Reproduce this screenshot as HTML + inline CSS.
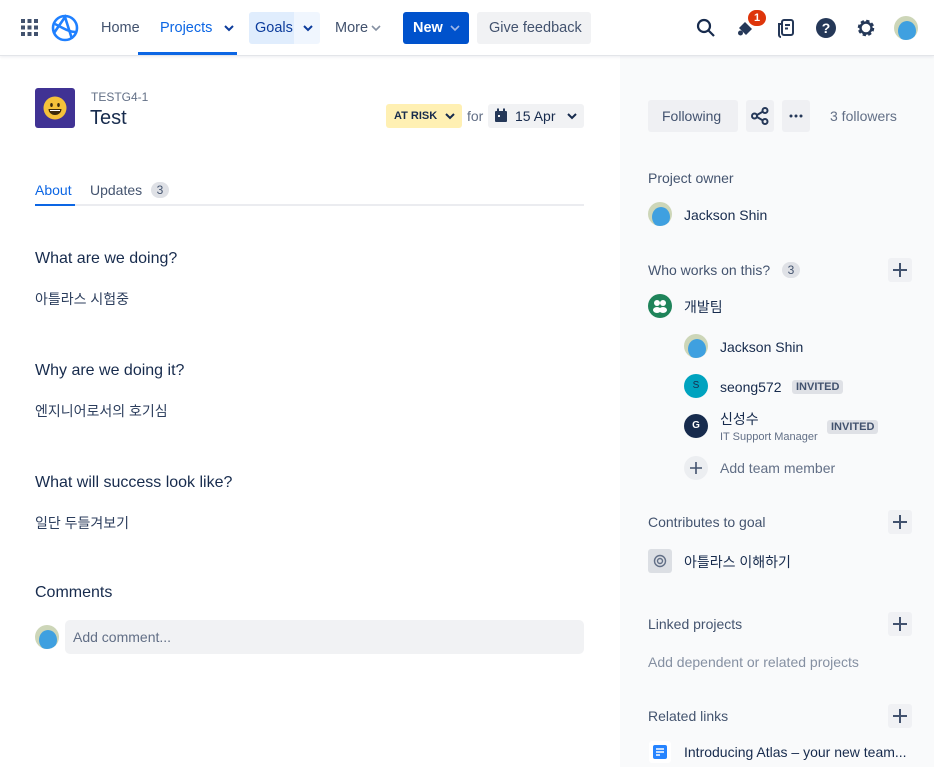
<!DOCTYPE html>
<html><head><meta charset="utf-8">
<style>
*{box-sizing:border-box;margin:0;padding:0}
body{width:934px;height:767px;overflow:hidden;background:#fff;font-family:"Liberation Sans","Noto Sans CJK KR",sans-serif;color:#172b4d;position:relative}
.a{position:absolute;white-space:nowrap}
.hdr{position:absolute;left:0;top:0;width:934px;height:56px;background:#fff;border-bottom:1px solid #e3e5e9;box-shadow:0 1px 3px rgba(9,30,66,.08);z-index:2}
.side{position:absolute;left:620px;top:56px;width:314px;height:711px;background:#f9fafb}
.nav{font-size:14.5px;color:#42526e}
.btnsq{position:absolute;width:24px;height:24px;background:#f0f1f4;border-radius:3px}
.btnsq:before,.btnsq:after{content:"";position:absolute;background:#42526e;left:11px;top:5px;width:2px;height:14px}
.btnsq:after{left:5px;top:11px;width:14px;height:2px}
.h{font-size:14px;color:#44546f}
.q{font-size:16px;color:#172b4d}
.k{font-size:14px;color:#172b4d}
.inv{position:absolute;background:#dfe1e6;color:#42526e;font-size:11px;font-weight:bold;padding:1px 4px;border-radius:3px}
.av{position:absolute;border-radius:50%;overflow:hidden}
</style></head><body>
<div class="hdr">
  <svg class="a" style="left:21px;top:19px" width="17" height="17" viewBox="0 0 17 17" fill="#42526e"><rect x="0" y="0" width="4" height="4"/><rect x="6.5" y="0" width="4" height="4"/><rect x="13" y="0" width="4" height="4"/><rect x="0" y="6.5" width="4" height="4"/><rect x="6.5" y="6.5" width="4" height="4"/><rect x="13" y="6.5" width="4" height="4"/><rect x="0" y="13" width="4" height="4"/><rect x="6.5" y="13" width="4" height="4"/><rect x="13" y="13" width="4" height="4"/></svg>
  <svg class="a" style="left:51px;top:14px" width="28" height="28" viewBox="0 0 28 28" fill="none" stroke="#1f80ff" stroke-width="2.6"><circle cx="14" cy="14" r="12"/><path d="M3 19 L14 3 L21 25"/><path d="M4 10 C12 14 18 18 25 18"/></svg>
  <div class="a nav" style="left:101px;top:20px">Home</div>
  <div class="a nav" style="left:160px;top:20px;color:#0c66e4">Projects</div>
  <svg class="a" style="left:224px;top:24px" width="10" height="8"><path d="M1 2 L5 6 L9 2" stroke="#0c3c9c" stroke-width="2" fill="none"/></svg>
  <div class="a" style="left:138px;top:52px;width:99px;height:3px;background:#0c66e4"></div>
  <div class="a" style="left:249px;top:12px;width:45px;height:32px;background:#e0edfd;border-radius:3px 0 0 3px"></div>
  <div class="a" style="left:294px;top:12px;width:26px;height:32px;background:#f0f6fe;border-radius:0 3px 3px 0"></div>
  <div class="a nav" style="left:255px;top:20px;color:#0c3c9c">Goals</div>
  <svg class="a" style="left:303px;top:24px" width="10" height="8"><path d="M1 2 L5 6 L9 2" stroke="#0c3c9c" stroke-width="2" fill="none"/></svg>
  <div class="a nav" style="left:335px;top:20px">More</div>
  <svg class="a" style="left:371px;top:24px" width="10" height="8"><path d="M1 2 L5 6 L9 2" stroke="#8590a2" stroke-width="1.6" fill="none"/></svg>
  <div class="a" style="left:403px;top:12px;width:66px;height:32px;background:#0052cc;border-radius:3px"></div>
  <div class="a" style="left:413px;top:20px;color:#fff;font-size:14.5px;font-weight:bold">New</div>
  <svg class="a" style="left:450px;top:24px" width="10" height="8"><path d="M1 2 L5 6 L9 2" stroke="#9fb8ea" stroke-width="1.6" fill="none"/></svg>
  <div class="a" style="left:477px;top:12px;width:114px;height:32px;background:#f1f2f4;border-radius:3px"></div>
  <div class="a" style="left:489px;top:20px;color:#42526e;font-size:14.5px">Give feedback</div>
  <svg class="a" style="left:696px;top:18px" width="20" height="20" fill="none" stroke="#172b4d" stroke-width="2.2"><circle cx="8" cy="8" r="6"/><path d="M12.5 12.5 L18 18"/></svg>
  <svg class="a" style="left:737px;top:19px" width="18" height="18" fill="#253858"><path d="M2 9 L8 3 L15 10 L9 16 Z"/><circle cx="3.5" cy="14" r="2.5"/></svg>
  <div class="a" style="left:748px;top:10px;width:18px;height:16px;background:#de350b;border-radius:8px;color:#fff;font-size:11px;font-weight:bold;text-align:center;line-height:16px">1</div>
  <svg class="a" style="left:777px;top:18px" width="18" height="20" fill="none" stroke="#253858" stroke-width="2"><rect x="5" y="2" width="11" height="15" rx="2"/><path d="M5 6 H2 V17 A2 2 0 0 0 4 19"/><path d="M8 7 H13 M8 10.5 H11"/></svg>
  <svg class="a" style="left:815px;top:17px" width="22" height="22"><circle cx="11" cy="11" r="10" fill="#253858"/><text x="11" y="16" font-size="14" font-weight="bold" fill="#fff" text-anchor="middle" font-family="Liberation Sans">?</text></svg>
  <svg class="a" style="left:856px;top:18px" width="20" height="20" viewBox="0 0 20 20"><circle cx="10" cy="10" r="6.5" fill="none" stroke="#253858" stroke-width="3.5" stroke-dasharray="3 2.1"/><circle cx="10" cy="10" r="5.5" fill="none" stroke="#253858" stroke-width="2.4"/></svg>
  <div class="av" style="left:894px;top:16px;width:24px;height:24px;background:#cdd6b8"><svg width="24" height="24"><ellipse cx="13" cy="15" rx="9" ry="10" fill="#3fa0e0"/></svg></div>
</div>
<div class="side"></div>

<div class="a" style="left:35px;top:88px;width:40px;height:40px;background:#403294;border-radius:3px"></div>
<svg class="a" style="left:43px;top:96px" width="24" height="24"><circle cx="12" cy="12" r="11.5" fill="#f5c13a"/><ellipse cx="8.5" cy="9" rx="1.3" ry="2" fill="#3c2a0c"/><ellipse cx="15.5" cy="9" rx="1.3" ry="2" fill="#3c2a0c"/><path d="M5.5 13 H18.5 A6.5 6 0 0 1 5.5 13Z" fill="#3c2a0c"/><path d="M7 14 H17 V15 H7Z" fill="#fff"/></svg>
<div class="a" style="left:91px;top:90px;font-size:12px;color:#626f86">TESTG4-1</div>
<div class="a" style="left:90px;top:107px;font-size:20px;color:#172b4d">Test</div>
<div class="a" style="left:386px;top:104px;width:76px;height:24px;background:#fff0b3;border-radius:3px"></div>
<div class="a" style="left:394px;top:110px;font-size:11px;font-weight:bold;color:#172b4d">AT RISK</div>
<svg class="a" style="left:445px;top:112px" width="10" height="8"><path d="M1 2 L5 6 L9 2" stroke="#172b4d" stroke-width="2" fill="none"/></svg>
<div class="a" style="left:467px;top:108px;font-size:14px;color:#626f86">for</div>
<div class="a" style="left:488px;top:104px;width:96px;height:24px;background:#f1f2f4;border-radius:3px"></div>
<svg class="a" style="left:494px;top:108px" width="14" height="15" fill="#253858"><rect x="1" y="3" width="12" height="11" rx="1"/><rect x="3" y="0.5" width="2" height="4"/><rect x="9" y="0.5" width="2" height="4"/><rect x="4" y="7" width="2" height="2" fill="#f1f2f4"/></svg>
<div class="a" style="left:515px;top:108px;font-size:14px;color:#172b4d">15 Apr</div>
<svg class="a" style="left:567px;top:112px" width="10" height="8"><path d="M1 2 L5 6 L9 2" stroke="#172b4d" stroke-width="2" fill="none"/></svg>

<div class="a" style="left:35px;top:182px;font-size:14px;color:#0c66e4">About</div>
<div class="a" style="left:90px;top:182px;font-size:14px;color:#44546f">Updates</div>
<div class="a" style="left:151px;top:182px;width:18px;height:16px;background:#dfe1e6;border-radius:8px;font-size:12px;text-align:center;line-height:16px;color:#44546f">3</div>
<div class="a" style="left:35px;top:204px;width:549px;height:2px;background:#ebecf0"></div>
<div class="a" style="left:35px;top:204px;width:40px;height:2px;background:#0c66e4"></div>

<div class="a q" style="left:35px;top:250px">What are we doing?</div>
<div class="a k" style="left:35px;top:289px;color:#2c3e5d">아틀라스 시험중</div>
<div class="a q" style="left:35px;top:362px">Why are we doing it?</div>
<div class="a k" style="left:35px;top:401px;color:#2c3e5d">엔지니어로서의 호기심</div>
<div class="a q" style="left:35px;top:474px">What will success look like?</div>
<div class="a k" style="left:35px;top:513px;color:#2c3e5d">일단 두들겨보기</div>
<div class="a q" style="left:35px;top:584px">Comments</div>
<div class="av" style="left:35px;top:625px;width:24px;height:24px;background:#cdd6b8"><svg width="24" height="24"><ellipse cx="13" cy="15" rx="9" ry="10" fill="#3fa0e0"/></svg></div>
<div class="a" style="left:65px;top:620px;width:519px;height:34px;background:#f1f2f4;border-radius:5px"></div>
<div class="a" style="left:73px;top:629px;font-size:14px;color:#626f86">Add comment...</div>

<div class="a" style="left:648px;top:100px;width:90px;height:32px;background:#eff0f3;border-radius:3px"></div>
<div class="a" style="left:662px;top:108px;font-size:14px;color:#42526e">Following</div>
<div class="a" style="left:746px;top:100px;width:28px;height:32px;background:#eff0f3;border-radius:3px"></div>
<svg class="a" style="left:750px;top:106px" width="20" height="20" fill="none" stroke="#253858" stroke-width="2"><circle cx="15" cy="4.5" r="2.5"/><circle cx="15" cy="15.5" r="2.5"/><circle cx="4.5" cy="10" r="2.5"/><path d="M7 9 L13 5.5 M7 11 L13 14.5"/></svg>
<div class="a" style="left:782px;top:100px;width:28px;height:32px;background:#eff0f3;border-radius:3px"></div>
<svg class="a" style="left:789px;top:114px" width="14" height="4" fill="#253858"><circle cx="2" cy="2" r="1.5"/><circle cx="7" cy="2" r="1.5"/><circle cx="12" cy="2" r="1.5"/></svg>
<div class="a" style="left:830px;top:108px;font-size:14px;color:#626f86">3 followers</div>

<div class="a h" style="left:648px;top:170px">Project owner</div>
<div class="av" style="left:648px;top:202px;width:24px;height:24px;background:#cdd6b8"><svg width="24" height="24"><ellipse cx="13" cy="15" rx="9" ry="10" fill="#3fa0e0"/></svg></div>
<div class="a k" style="left:684px;top:207px">Jackson Shin</div>

<div class="a h" style="left:648px;top:262px">Who works on this?</div>
<div class="a" style="left:782px;top:262px;width:18px;height:16px;background:#dfe1e6;border-radius:8px;font-size:12px;text-align:center;line-height:16px;color:#44546f">3</div>
<div class="btnsq" style="left:888px;top:258px"></div>
<svg class="a" style="left:648px;top:294px" width="24" height="24"><circle cx="12" cy="12" r="12" fill="#1f845a"/><circle cx="9" cy="9" r="3" fill="#fff"/><circle cx="15" cy="9" r="3" fill="#fff"/><ellipse cx="9" cy="16" rx="4" ry="3" fill="#fff"/><ellipse cx="15" cy="16" rx="4" ry="3" fill="#fff"/></svg>
<div class="a k" style="left:684px;top:297px">개발팀</div>
<div class="av" style="left:684px;top:334px;width:24px;height:24px;background:#cdd6b8"><svg width="24" height="24"><ellipse cx="13" cy="15" rx="9" ry="10" fill="#3fa0e0"/></svg></div>
<div class="a k" style="left:720px;top:339px">Jackson Shin</div>
<div class="av" style="left:684px;top:374px;width:24px;height:24px;background:#00a3bf;color:#172b4d;font-size:10px;text-align:center;line-height:24px">S</div>
<div class="a k" style="left:720px;top:379px">seong572</div>
<div class="inv" style="left:792px;top:380px">INVITED</div>
<div class="av" style="left:684px;top:414px;width:24px;height:24px;background:#172b4d;color:#fff;font-size:10px;font-weight:bold;text-align:center;line-height:24px">G</div>
<div class="a k" style="left:720px;top:409px">신성수</div>
<div class="a" style="left:720px;top:431px;font-size:11px;color:#626f86">IT Support Manager</div>
<div class="inv" style="left:827px;top:420px">INVITED</div>
<div class="av" style="left:684px;top:456px;width:24px;height:24px;background:#eceef1"></div>
<svg class="a" style="left:690px;top:462px" width="12" height="12"><path d="M6 0 V12 M0 6 H12" stroke="#42526e" stroke-width="1.6"/></svg>
<div class="a" style="left:720px;top:460px;font-size:14px;color:#626f86">Add team member</div>

<div class="a h" style="left:648px;top:514px">Contributes to goal</div>
<div class="btnsq" style="left:888px;top:510px"></div>
<div class="a" style="left:648px;top:549px;width:24px;height:24px;background:#dcdfe4;border-radius:3px"></div>
<svg class="a" style="left:653px;top:554px" width="14" height="14" fill="none" stroke="#626f86" stroke-width="1.4"><circle cx="7" cy="7" r="5.5"/><circle cx="7" cy="7" r="2.5"/></svg>
<div class="a k" style="left:684px;top:552px">아틀라스 이해하기</div>

<div class="a h" style="left:648px;top:616px">Linked projects</div>
<div class="btnsq" style="left:888px;top:612px"></div>
<div class="a" style="left:648px;top:654px;font-size:14px;color:#8590a2">Add dependent or related projects</div>

<div class="a h" style="left:648px;top:708px">Related links</div>
<div class="btnsq" style="left:888px;top:704px"></div>
<div class="a" style="left:649px;top:741px;width:22px;height:22px;background:#fff;border-radius:3px"></div>
<svg class="a" style="left:653px;top:745px" width="14" height="14"><rect width="14" height="14" rx="2" fill="#2684ff"/><path d="M3 4 H11 M3 7 H11 M3 10 H7" stroke="#fff" stroke-width="1.5"/></svg>
<div class="a k" style="left:684px;top:744px">Introducing Atlas – your new team...</div>
</body></html>
